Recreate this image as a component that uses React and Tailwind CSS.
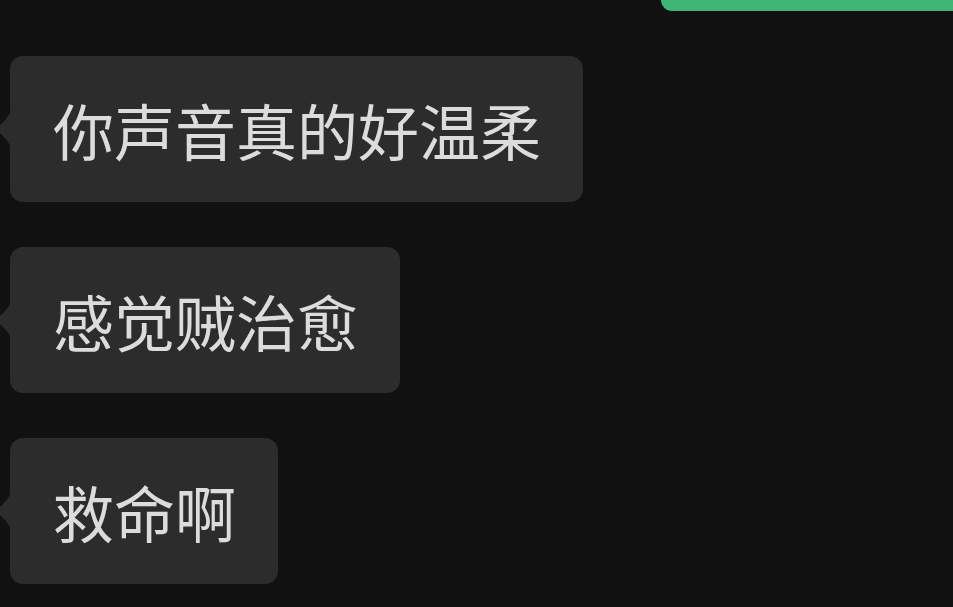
import React from "react";

const messages = ["你声音真的好温柔", "感觉贼治愈", "救命啊"];

function Bubble({ text }) {
  return (
    <div className="relative self-start ml-[10px]">
      <svg
        className="absolute left-[-10px] top-1/2 -translate-y-1/2"
        width="11"
        height="44"
        viewBox="0 0 11 44"
      >
        <path d="M11 0 C11 8 4 14 0 18 L0 26 C4 30 11 36 11 44 Z" fill="#2c2c2c" />
      </svg>
      <div className="h-[146px] flex items-center pl-[43px] pr-[42px] rounded-[13px] bg-[#2c2c2c] text-[#dcdcdc] text-[61px] leading-none whitespace-nowrap">
        {text}
      </div>
    </div>
  );
}

export default function App() {
  return (
    <div
      className="w-[953px] h-[607px] overflow-hidden bg-[#111111] flex flex-col"
      style={{ fontFamily: '"Noto Sans CJK SC", "Noto Sans", sans-serif' }}
    >
      <div className="self-end w-[292px] h-[11px] shrink-0 bg-[#3eb575] rounded-bl-[13px]" />
      <div className="flex flex-col gap-[45px] mt-[45px]">
        {messages.map((m) => (
          <Bubble key={m} text={m} />
        ))}
      </div>
    </div>
  );
}
